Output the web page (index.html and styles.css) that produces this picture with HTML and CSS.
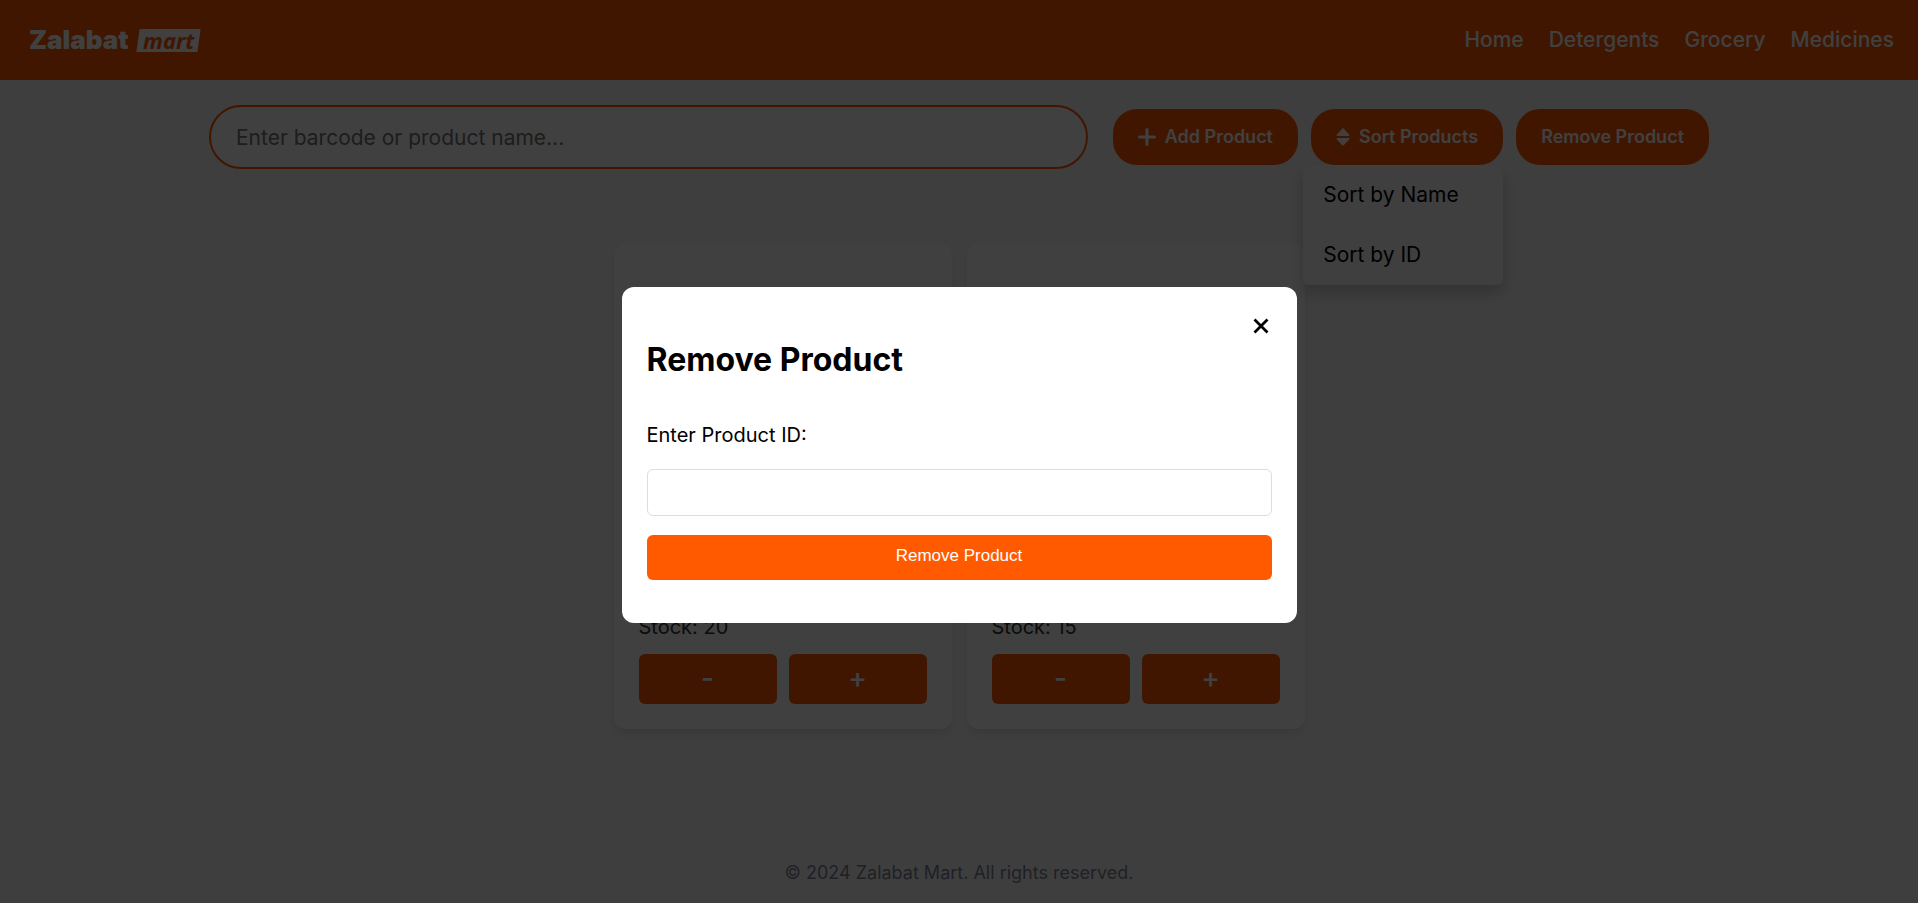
FILE: index.html
```
<!DOCTYPE html>
<html lang="en">
<head>
<meta charset="utf-8">
<title>Zalabat Mart</title>
<link rel="stylesheet" href="styles.css">
</head>
<body>
<header class="navbar">
  <a class="logo" href="#" aria-label="Zalabat mart"><span class="logo-name">Zalabat</span><span class="logo-tag"><span>mart</span></span></a>
  <nav class="nav-links">
    <a href="#">Home</a><a href="#">Detergents</a><a href="#">Grocery</a><a href="#">Medicines</a>
  </nav>
</header>

<section class="toolbar">
  <input class="search" type="text" placeholder="Enter barcode or product name..." aria-label="Search products">
  <div class="actions">
    <button class="pill" type="button">
      <svg width="18" height="20" viewBox="0 0 18 20" aria-hidden="true"><path d="M9 2.500v15M1.500 10h15" stroke="currentColor" stroke-width="3" stroke-linecap="round"/></svg>
      Add Product
    </button>
    <div class="sort">
      <button class="pill" type="button">
        <svg width="14" height="20" viewBox="0 0 14 20" aria-hidden="true"><path d="M7 1 13.200 7.500q.8 1.500-.7 1.500h-11Q0 9 .8 7.500ZM7 19 13.200 12.500q.8-1.500-.7-1.500h-11Q0 11 .8 12.500Z" fill="currentColor"/></svg>
        Sort Products
      </button>
      <div class="sort-menu"><a href="#">Sort by Name</a><a href="#">Sort by ID</a></div>
    </div>
    <button class="pill" type="button">Remove Product</button>
  </div>
</section>

<main class="products">
  <article class="card">
    <p class="stock">Stock: 20</p>
    <div class="stepper"><button type="button">-</button><button type="button">+</button></div>
  </article>
  <article class="card">
    <p class="stock">Stock: 15</p>
    <div class="stepper"><button type="button">-</button><button type="button">+</button></div>
  </article>
</main>

<footer class="footer">© 2024 Zalabat Mart. All rights reserved.</footer>

<div class="overlay">
  <form class="modal" role="dialog" aria-labelledby="modal-title">
    <button class="close" type="button" aria-label="Close"><svg width="16" height="16" viewBox="0 0 16 16" aria-hidden="true"><path d="M1.500 1.500l13 13M14.500 1.500l-13 13" stroke="currentColor" stroke-width="2.800"/></svg></button>
    <h2 id="modal-title">Remove Product</h2>
    <label for="product-id">Enter Product ID:</label>
    <input id="product-id" type="text">
    <button class="submit" type="button">Remove Product</button>
  </form>
</div>
</body>
</html>
```
FILE: styles.css
```
* {
  box-sizing: border-box;
}

body {
  margin: 0;
  min-height: 100vh;
  display: flex;
  flex-direction: column;
  background: #f8f8f8;
  color: #000;
  font-family: Inter, sans-serif;
  font-size: 20px;
  line-height: 30px;
}

a {
  color: inherit;
  text-decoration: none;
}

button,
input {
  font: inherit;
}

button {
  border: 0;
  color: #fff;
  background: #ff5a00;
}

.navbar {
  display: flex;
  justify-content: space-between;
  align-items: center;
  height: 80px;
  padding: 0 24px 0 29px;
  background: #ff5a00;
  color: #fff;
}

.logo {
  display: flex;
  align-items: center;
  gap: 9px;
}

.logo-name {
  font: 900 26px/24px Inter, sans-serif;
}

.logo-tag {
  padding: 0 5px;
  background: #fff;
  color: #ff5a00;
  font: italic 700 22px/23px "Open Sans", sans-serif;
  transform: skewX(-8deg);
}

.logo-tag span {
  display: block;
  transform: skewX(8deg);
}

.nav-links {
  display: flex;
  gap: 25px;
  font-size: 21px;
  font-weight: 500;
}

.toolbar {
  display: flex;
  align-items: center;
  gap: 25px;
  width: 100%;
  max-width: 1500px;
  margin: 25px auto 0;
}

.search {
  flex: 1;
  min-width: 0;
  height: 64px;
  padding: 0 25px;
  border: 2px solid #ff5a00;
  border-radius: 32px;
  background: #fff;
  font-size: 21px;
}

.search::placeholder {
  color: #757575;
}

.actions {
  display: flex;
  gap: 13px;
}

.pill {
  display: flex;
  align-items: center;
  gap: 9px;
  height: 56px;
  padding: 0 25px;
  border-radius: 24px;
  font-size: 18px;
  font-weight: 600;
  white-space: nowrap;
}

.sort {
  position: relative;
}

.sort-menu {
  position: absolute;
  top: 100%;
  right: 0;
  width: 200px;
  border-radius: 6px;
  background: #f9f9f9;
  box-shadow: 0 8px 16px rgba(0, 0, 0, 0.2);
  font-size: 21px;
}

.sort-menu a {
  display: block;
  padding: 15px 20px;
}

.products {
  display: flex;
  justify-content: center;
  gap: 15px;
  margin-top: 75px;
}

.card {
  display: flex;
  flex-direction: column;
  justify-content: flex-end;
  gap: 12px;
  width: 338px;
  min-height: 485px;
  padding: 25px;
  border-radius: 12px;
  background: #fff;
  box-shadow: 0 5px 10px rgba(0, 0, 0, 0.1);
}

.stock {
  margin: 0;
  color: #333;
}

.stepper {
  display: flex;
  gap: 12px;
}

.stepper button {
  flex: 1;
  height: 50px;
  padding: 0 0 2px;
  border-radius: 6px;
  font-size: 28px;
  font-weight: 500;
}

.footer {
  margin-top: auto;
  padding: 15px 0;
  text-align: center;
  font-size: 18px;
  color: #7d8296;
}

.overlay {
  position: fixed;
  inset: 0;
  display: flex;
  align-items: center;
  justify-content: center;
  padding-top: 6px;
  background: rgba(0, 0, 0, 0.75);
}

.modal {
  position: relative;
  display: flex;
  flex-direction: column;
  width: 675px;
  max-width: 100%;
  padding: 53px 25px 43px;
  border-radius: 12px;
  background: #fff;
}

.close {
  position: absolute;
  top: 25px;
  right: 25px;
  display: flex;
  padding: 6px 3px;
  background: none;
  color: #000;
}

.modal h2 {
  margin: 0 0 40px;
  font-size: 32px;
  line-height: 40px;
}

.modal label {
  margin-bottom: 19px;
}

.modal input {
  height: 47px;
  margin-bottom: 19px;
  padding: 0 12px;
  border: 1px solid #ddd;
  border-radius: 6px;
}

.submit {
  height: 45px;
  padding: 0 0 3px;
  border-radius: 6px;
  font-family: "Liberation Sans", Arial, sans-serif;
  font-size: 17px;
}
```
